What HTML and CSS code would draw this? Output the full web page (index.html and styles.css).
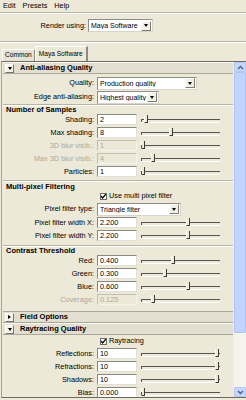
FILE: index.html
```html
<!DOCTYPE html>
<html>
<head>
<meta charset="utf-8">
<link rel="stylesheet" href="styles.css">
</head>
<body>
<div class="menubar"><span>Edit</span><span>Presets</span><span>Help</span></div>
<div class="sep"></div>
<div class="render-row">
  <span class="rlbl">Render using:</span>
  <div class="combo w-render"><span class="ctext">Maya Software</span><span class="cbtn"><i class="tri-down"></i></span></div>
</div>
<div class="sep"></div>
<div class="tabs">
  <div class="tab">Common</div>
  <div class="tab active">Maya Software</div>
</div>
<div class="panel">
  <div class="content">
    <div class="fhead"><span class="fbtn"><i class="tri-down"></i></span>Anti-aliasing Quality</div>
    <div class="crow first"><span class="lbl">Quality:</span><div class="combo w-quality"><span class="ctext">Production quality</span><span class="cbtn"><i class="tri-down"></i></span></div></div>
    <div class="crow"><span class="lbl">Edge anti-aliasing:</span><div class="combo w-edge"><span class="ctext">Highest quality</span><span class="cbtn"><i class="tri-down"></i></span></div></div>

    <div class="shead">Number of Samples</div>
    <div class="row"><span class="lbl">Shading:</span><span class="fld">2</span><div class="sld"><i class="thumb" style="left:3px"></i></div></div>
    <div class="row"><span class="lbl">Max shading:</span><span class="fld">8</span><div class="sld"><i class="thumb" style="left:28px"></i></div></div>
    <div class="row dis"><span class="lbl">3D blur visib.:</span><span class="fld">1</span><div class="sld"><i class="thumb" style="left:0px"></i></div></div>
    <div class="row dis"><span class="lbl">Max 3D blur visib.:</span><span class="fld">4</span><div class="sld"><i class="thumb" style="left:10px"></i></div></div>
    <div class="row"><span class="lbl">Particles:</span><span class="fld">1</span><div class="sld"><i class="thumb" style="left:0px"></i></div></div>

    <div class="shead gap">Multi-pixel Filtering</div>
    <div class="krow"><span class="chk"><svg width="7" height="7" viewBox="0 0 7 7"><polyline points="1,3 2.6,5 6,1" fill="none" stroke="#000" stroke-width="1.3"/></svg></span>Use multi pixel filter</div>
    <div class="crow"><span class="lbl">Pixel filter type:</span><div class="combo w-filter"><span class="ctext">Triangle filter</span><span class="cbtn"><i class="tri-down"></i></span></div></div>
    <div class="row"><span class="lbl">Pixel filter width X:</span><span class="fld">2.200</span><div class="sld"><i class="thumb" style="left:45px"></i></div></div>
    <div class="row"><span class="lbl">Pixel filter width Y:</span><span class="fld">2.200</span><div class="sld"><i class="thumb" style="left:45px"></i></div></div>

    <div class="shead gap3">Contrast Threshold</div>
    <div class="row"><span class="lbl">Red:</span><span class="fld">0.400</span><div class="sld"><i class="thumb" style="left:30px"></i></div></div>
    <div class="row"><span class="lbl">Green:</span><span class="fld">0.300</span><div class="sld"><i class="thumb" style="left:22px"></i></div></div>
    <div class="row"><span class="lbl">Blue:</span><span class="fld">0.600</span><div class="sld"><i class="thumb" style="left:45px"></i></div></div>
    <div class="row dis"><span class="lbl">Coverage:</span><span class="fld">0.125</span><div class="sld"><i class="thumb" style="left:10px"></i></div></div>

    <div class="fhead closed"><span class="fbtn"><i class="tri-right"></i></span>Field Options</div>
    <div class="fhead"><span class="fbtn"><i class="tri-down"></i></span>Raytracing Quality</div>
    <div class="krow"><span class="chk"><svg width="7" height="7" viewBox="0 0 7 7"><polyline points="1,3 2.6,5 6,1" fill="none" stroke="#000" stroke-width="1.3"/></svg></span>Raytracing</div>
    <div class="row"><span class="lbl">Reflections:</span><span class="fld">10</span><div class="sld"><i class="thumb" style="left:74px"></i></div></div>
    <div class="row"><span class="lbl">Refractions:</span><span class="fld">10</span><div class="sld"><i class="thumb" style="left:74px"></i></div></div>
    <div class="row"><span class="lbl">Shadows:</span><span class="fld">10</span><div class="sld"><i class="thumb" style="left:74px"></i></div></div>
    <div class="row"><span class="lbl">Bias:</span><span class="fld">0.000</span><div class="sld"><i class="thumb" style="left:0px"></i></div></div>
  </div>
  <div class="sb">
    <div class="sbtn"><svg width="7" height="5" viewBox="0 0 7 5"><polyline points="1,4 3.5,1.5 6,4" fill="none" stroke="#4d6185" stroke-width="1.4"/></svg></div>
    <div class="sthumb"></div>
    <div class="strack"></div>
    <div class="sbtn"><svg width="7" height="5" viewBox="0 0 7 5"><polyline points="1,1 3.5,3.5 6,1" fill="none" stroke="#4d6185" stroke-width="1.4"/></svg></div>
  </div>
</div>
</body>
</html>
```
FILE: styles.css
```css
* { box-sizing: border-box; }
html, body { margin: 0; padding: 0; }
body {
  width: 246px;
  height: 400px;
  overflow: hidden;
  background: #ece9d8;
  font-family: "Liberation Sans", Arial, sans-serif;
  font-size: 7.3px;
  color: #000;
  line-height: 1;
}
.menubar {
  height: 12px;
  display: flex;
  align-items: center;
  gap: 7px;
  padding-left: 3px;
}
.sep {
  height: 2px;
  border-top: 1px solid #b9b6a8;
  border-bottom: 1px solid #fff;
}
.render-row {
  height: 27px;
  display: flex;
  align-items: flex-start;
  padding-top: 5px;
}
.rlbl {
  width: 88px;
  text-align: right;
  padding-right: 2px;
  line-height: 14px;
}
.combo {
  height: 13px;
  display: flex;
  align-items: center;
  background: #fff;
  border: 1px solid #8e8d86;
  border-right-color: #d8d6cc;
  border-bottom-color: #d8d6cc;
  font-size: 7px;
}
.ctext { flex: 1; padding-left: 2px; white-space: nowrap; overflow: hidden; }
.cbtn {
  width: 10px;
  height: 10px;
  flex: none;
  margin-right: 1px;
  background: #f1efe6;
  border: 1px solid #fff;
  border-right-color: #7d7c75;
  border-bottom-color: #7d7c75;
  display: flex;
  align-items: center;
  justify-content: center;
}
.tri-down {
  width: 0; height: 0;
  border-left: 2.5px solid transparent;
  border-right: 2.5px solid transparent;
  border-top: 3px solid #000;
}
.tri-right {
  width: 0; height: 0;
  border-top: 2.5px solid transparent;
  border-bottom: 2.5px solid transparent;
  border-left: 3px solid #000;
}
.w-render { width: 65px; }
.w-quality { width: 100px; }
.w-edge { width: 62px; }
.w-filter { width: 84px; }

.tabs {
  height: 18px;
  display: flex;
  align-items: flex-end;
  padding-left: 2px;
  font-size: 6.6px;
}
.tab {
  height: 12px;
  padding: 0 2px;
  display: flex;
  align-items: center;
  border: 1px solid #fff;
  border-right-color: #8d8b80;
  border-bottom: none;
  background: #e6e3d4;
}
.tab.active {
  height: 15px;
  padding: 0 3px;
  background: #ece9d8;
  border-right: 2px solid #8d8b80;
}

.panel {
  height: 337px;
  display: flex;
  margin-left: 1px;
  border-top: 1px solid #6b6a62;
  border-bottom: 1px solid #6b6a62;
  border-left: 1px solid #a6a497;
}
.content {
  flex: 1;
  overflow: hidden;
  padding-left: 1px;
}
.fhead {
  height: 12px;
  display: flex;
  align-items: center;
  font-weight: bold;
  font-size: 7.5px;
  background: #e2dfd0;
  border-top: 1px solid #fbfaf5;
  border-bottom: 1px solid #a9a798;
}
.fhead.closed { margin-top: 5px; border-top-color: #a9a798; }
.fbtn {
  width: 9px;
  height: 9px;
  margin: 0 6px 0 2px;
  background: #f3f1e8;
  border: 1px solid #fff;
  border-right-color: #77766e;
  border-bottom-color: #77766e;
  display: flex;
  align-items: center;
  justify-content: center;
}
.crow {
  height: 14px;
  display: flex;
  align-items: center;
}
.crow.first { margin-top: 2px; }
.lbl {
  width: 94px;
  flex: none;
  text-align: right;
  padding-right: 3px;
  white-space: nowrap;
}
.shead {
  height: 9px;
  display: flex;
  align-items: flex-end;
  padding-left: 3px;
  font-weight: bold;
  font-size: 7.5px;
  border-top: 1px solid #b7b4a6;
  box-shadow: inset 0 1px 0 #fff;
}
.shead.gap { margin-top: 2px; height: 10px; }
.shead.gap3 { margin-top: 3px; }
.row {
  height: 13px;
  display: flex;
  align-items: center;
}
.fld {
  width: 40px;
  height: 11px;
  flex: none;
  background: #fff;
  border-top: 1px solid #8a8980;
  border-left: 1px solid #8a8980;
  border-right: 1px solid #e2e0d6;
  border-bottom: 1px solid #e2e0d6;
  padding-left: 2px;
  display: flex;
  align-items: center;
}
.dis .lbl { color: #aca899; }
.dis .fld { background: #ece9d8; color: #aca899; border-color: #c2bfb2 #f5f4ee #f5f4ee #c2bfb2; }
.sld {
  width: 79px;
  height: 11px;
  margin-left: 4px;
  position: relative;
}
.sld::before {
  content: "";
  position: absolute;
  left: 0; right: 0; top: 5px;
  height: 2px;
  border-top: 1px solid #55544e;
  border-bottom: 1px solid #fff;
}
.sld::after {
  content: "";
  position: absolute;
  left: 0; top: 5px;
  width: 1px; height: 3px;
  background: #55544e;
}
.thumb {
  position: absolute;
  top: 1px;
  width: 4px;
  height: 8px;
  background: #ece9d8;
  border-left: 1px solid #fff;
  border-right: 1px solid #3d3c38;
  border-bottom: 1px solid #3d3c38;
}
.krow {
  height: 12px;
  display: flex;
  align-items: center;
  padding-left: 97px;
  gap: 2px;
}
.chk {
  width: 7px;
  height: 7px;
  background: #fff;
  border: 1px solid #6f6e67;
  display: flex;
  align-items: center;
  justify-content: center;
  overflow: hidden;
}
.chk svg { flex: none; }

.sb {
  width: 13px;
  flex: none;
  display: flex;
  flex-direction: column;
  background: #f4f3ee;
  border-left: 1px solid #eeede7;
}
.sbtn {
  height: 10px;
  flex: none;
  background: #c6d6fc;
  border: 1px solid #b5c8f5;
  border-radius: 1px;
  display: flex;
  align-items: center;
  justify-content: center;
}
.sthumb {
  height: 261px;
  flex: none;
  background: #c3d3fb;
  border: 1px solid #b0c4f4;
  border-radius: 1px;
}
.strack { flex: 1; }
```
